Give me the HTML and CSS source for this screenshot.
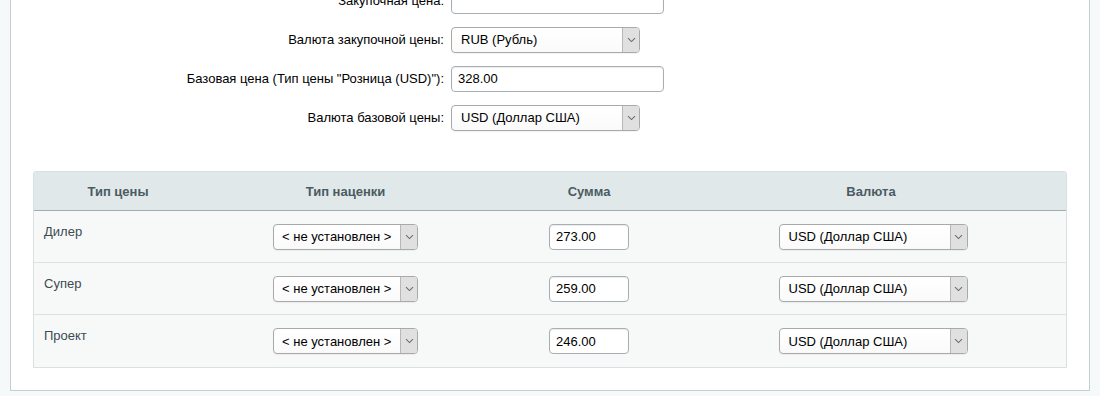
FILE: index.html
```html
<!DOCTYPE html>
<html lang="ru">
<head>
	<meta charset="UTF-8">
	<title>Цены</title>
	<link rel="stylesheet" href="styles.css">
</head>
<body>
	<div class="panel">
		<div class="form">
			<div class="form-row">
				<label class="form-label">Закупочная цена:</label>
				<input class="text-input wide" type="text" value="">
			</div>
			<div class="form-row">
				<label class="form-label">Валюта закупочной цены:</label>
				<div class="select wide-select">
					<span class="select-value">RUB (Рубль)</span>
					<span class="select-arrow"><svg width="9" height="6" viewBox="0 0 9 6"><path d="M1 1.2 L4.5 4.6 L8 1.2" fill="none" stroke="#6c6c6c" stroke-width="1.1"/></svg></span>
				</div>
			</div>
			<div class="form-row">
				<label class="form-label">Базовая цена (Тип цены "Розница (USD)"):</label>
				<input class="text-input wide" type="text" value="328.00">
			</div>
			<div class="form-row">
				<label class="form-label">Валюта базовой цены:</label>
				<div class="select wide-select">
					<span class="select-value">USD (Доллар США)</span>
					<span class="select-arrow"><svg width="9" height="6" viewBox="0 0 9 6"><path d="M1 1.2 L4.5 4.6 L8 1.2" fill="none" stroke="#6c6c6c" stroke-width="1.1"/></svg></span>
				</div>
			</div>
		</div>

		<div class="prices">
			<div class="prices-head">
				<div class="cell">Тип цены</div>
				<div class="cell">Тип наценки</div>
				<div class="cell">Сумма</div>
				<div class="cell">Валюта</div>
			</div>

			<div class="prices-row">
				<div class="cell name">Дилер</div>
				<div class="cell">
					<div class="select markup-select">
						<span class="select-value">&lt; не установлен &gt;</span>
						<span class="select-arrow"><svg width="9" height="6" viewBox="0 0 9 6"><path d="M1 1.2 L4.5 4.6 L8 1.2" fill="none" stroke="#6c6c6c" stroke-width="1.1"/></svg></span>
					</div>
				</div>
				<div class="cell"><input class="text-input sum" type="text" value="273.00"></div>
				<div class="cell currency">
					<div class="select wide-select">
						<span class="select-value">USD (Доллар США)</span>
						<span class="select-arrow"><svg width="9" height="6" viewBox="0 0 9 6"><path d="M1 1.2 L4.5 4.6 L8 1.2" fill="none" stroke="#6c6c6c" stroke-width="1.1"/></svg></span>
					</div>
				</div>
			</div>

			<div class="prices-row">
				<div class="cell name">Супер</div>
				<div class="cell">
					<div class="select markup-select">
						<span class="select-value">&lt; не установлен &gt;</span>
						<span class="select-arrow"><svg width="9" height="6" viewBox="0 0 9 6"><path d="M1 1.2 L4.5 4.6 L8 1.2" fill="none" stroke="#6c6c6c" stroke-width="1.1"/></svg></span>
					</div>
				</div>
				<div class="cell"><input class="text-input sum" type="text" value="259.00"></div>
				<div class="cell currency">
					<div class="select wide-select">
						<span class="select-value">USD (Доллар США)</span>
						<span class="select-arrow"><svg width="9" height="6" viewBox="0 0 9 6"><path d="M1 1.2 L4.5 4.6 L8 1.2" fill="none" stroke="#6c6c6c" stroke-width="1.1"/></svg></span>
					</div>
				</div>
			</div>

			<div class="prices-row">
				<div class="cell name">Проект</div>
				<div class="cell">
					<div class="select markup-select">
						<span class="select-value">&lt; не установлен &gt;</span>
						<span class="select-arrow"><svg width="9" height="6" viewBox="0 0 9 6"><path d="M1 1.2 L4.5 4.6 L8 1.2" fill="none" stroke="#6c6c6c" stroke-width="1.1"/></svg></span>
					</div>
				</div>
				<div class="cell"><input class="text-input sum" type="text" value="246.00"></div>
				<div class="cell currency">
					<div class="select wide-select">
						<span class="select-value">USD (Доллар США)</span>
						<span class="select-arrow"><svg width="9" height="6" viewBox="0 0 9 6"><path d="M1 1.2 L4.5 4.6 L8 1.2" fill="none" stroke="#6c6c6c" stroke-width="1.1"/></svg></span>
					</div>
				</div>
			</div>
		</div>
	</div>
</body>
</html>
```

FILE: styles.css
```css
*{
	margin: 0;
	padding: 0;
	box-sizing: border-box;
}
body{
	background-color: #f5f9f9;
	font-family: "Liberation Sans", Arial, sans-serif;
	font-size: 13px;
	color: #000;
}
.panel{
	margin: -19px 10px 0 10px;
	background-color: #fff;
	border: 1px solid #c6cfd0;
	border-top: none;
	padding: 0 22px 22px 22px;
}

/* form */
.form{
	display: flex;
	flex-direction: column;
}
.form-row{
	display: grid;
	grid-template-columns: 411px auto;
	column-gap: 7px;
	align-items: center;
	height: 39px;
}
.form-label{
	text-align: right;
}

/* inputs */
.text-input{
	height: 26px;
	border: 1px solid #a7afb4;
	border-radius: 4px;
	box-shadow: inset 0 1px 1px rgba(0,0,0,.08);
	padding: 0 6px;
	font-family: "Liberation Sans", Arial, sans-serif;
	font-size: 13px;
	color: #000;
	background: #fff;
	outline: none;
}
.text-input.wide{
	width: 213px;
}
.text-input.sum{
	width: 80px;
}

.select{
	display: flex;
	height: 26px;
	border: 1px solid #a9a9a9;
	border-radius: 4px;
	background: linear-gradient(#fff, #fafafa);
	box-shadow: 0 1px 1px rgba(0,0,0,.05);
	overflow: hidden;
}
.wide-select{
	width: 189px;
}
.markup-select{
	width: 145px;
}
.select-value{
	flex: 1;
	display: flex;
	align-items: center;
	padding-left: 9px;
	white-space: nowrap;
}
.markup-select .select-value{
	padding-left: 8px;
}
.select-arrow{
	width: 17px;
	display: flex;
	align-items: center;
	justify-content: center;
	background-color: #e0e0e0;
	border-left: 1px solid #b7b7b7;
}

/* prices table */
.prices{
	margin-top: 34px;
	border: 1px solid #d9e0e2;
	border-radius: 3px 3px 0 0;
	background-color: #f7f9f9;
}
.prices-head,
.prices-row{
	display: grid;
	grid-template-columns: 168px 287px 200px 1fr;
	padding-right: 13px;
}
.prices-head{
	height: 39px;
	align-items: center;
	background-color: #e1e8ea;
	border-bottom: 1px solid #a3abae;
	font-weight: bold;
	color: #4b5b62;
	border-radius: 2px 2px 0 0;
}
.prices-head .cell{
	text-align: center;
}
.prices-row{
	height: 52px;
	align-items: center;
	border-bottom: 1px solid #dce2e3;
}
.prices-row:last-child{
	border-bottom: none;
}
.prices-row .cell{
	display: flex;
	justify-content: center;
}
.prices-row .cell.name{
	justify-content: flex-start;
	align-self: start;
	padding: 13px 0 0 10px;
	color: #3d4a50;
}
.prices-row .cell.currency{
	padding-left: 4px;
}
```
